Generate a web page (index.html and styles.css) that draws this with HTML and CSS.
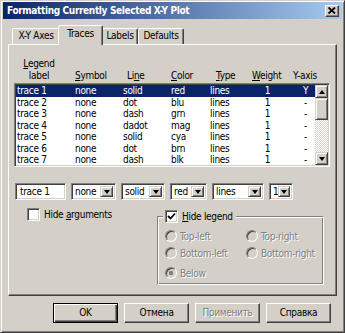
FILE: index.html
```html
<!DOCTYPE html>
<html lang="en">
<head>
  <meta charset="UTF-8">
  <title>Formatting Currently Selected X-Y Plot</title>
  <link rel="stylesheet" href="styles.css">
</head>
<body>
  <div class="window">
    <div class="titlebar">
      <span class="title">Formatting Currently Selected X-Y Plot</span>
      <span class="close">
        <svg width="8" height="7" viewBox="0 0 8 7"><path d="M0.5 0.5 L7 6.5 M7 0.5 L0.5 6.5" stroke="#000" stroke-width="1.8"/></svg>
      </span>
    </div>

    <div class="tabs">
      <div class="tab xy">X-Y Axes</div>
      <div class="tab traces active">Traces</div>
      <div class="tab labels">Labels</div>
      <div class="tab defaults">Defaults</div>
    </div>

    <div class="panel">
      <div class="list-head">
        <div class="h-label"><u>L</u>egend<br>label</div>
        <div class="h-symbol"><u>S</u>ymbol</div>
        <div class="h-line">Li<u>n</u>e</div>
        <div class="h-color"><u>C</u>olor</div>
        <div class="h-type"><u>T</u>ype</div>
        <div class="h-weight"><u>W</u>eight</div>
        <div class="h-axis">Y-axis</div>
      </div>

      <div class="list">
        <div class="rows">
          <div class="row sel"><span>trace 1</span><span>none</span><span>solid</span><span>red</span><span>lines</span><span class="c">1</span><span class="c">Y</span></div>
          <div class="row"><span>trace 2</span><span>none</span><span>dot</span><span>blu</span><span>lines</span><span class="c">1</span><span class="c">-</span></div>
          <div class="row"><span>trace 3</span><span>none</span><span>dash</span><span>grn</span><span>lines</span><span class="c">1</span><span class="c">-</span></div>
          <div class="row"><span>trace 4</span><span>none</span><span>dadot</span><span>mag</span><span>lines</span><span class="c">1</span><span class="c">-</span></div>
          <div class="row"><span>trace 5</span><span>none</span><span>solid</span><span>cya</span><span>lines</span><span class="c">1</span><span class="c">-</span></div>
          <div class="row"><span>trace 6</span><span>none</span><span>dot</span><span>brn</span><span>lines</span><span class="c">1</span><span class="c">-</span></div>
          <div class="row"><span>trace 7</span><span>none</span><span>dash</span><span>blk</span><span>lines</span><span class="c">1</span><span class="c">-</span></div>
        </div>
        <div class="scrollbar">
          <div class="sb-btn"><span class="arrow up"></span></div>
          <div class="thumb"></div>
          <div class="track"></div>
          <div class="sb-btn"><span class="arrow down"></span></div>
        </div>
      </div>

      <div class="editors">
        <div class="field w-name">trace 1</div>
        <div class="combo w-symbol"><span>none</span><span class="drop"><span class="arrow down"></span></span></div>
        <div class="combo w-line"><span>solid</span><span class="drop"><span class="arrow down"></span></span></div>
        <div class="combo w-color"><span>red</span><span class="drop"><span class="arrow down"></span></span></div>
        <div class="combo w-type"><span>lines</span><span class="drop"><span class="arrow down"></span></span></div>
        <div class="combo w-weight"><span>1</span><span class="drop"><span class="arrow down"></span></span></div>
      </div>

      <div class="options">
        <div class="check-row args">
          <span class="box"></span>
          <span>Hide <u>a</u>rguments</span>
        </div>

        <div class="group">
          <div class="legend check-row">
            <span class="box">
              <svg width="9" height="9" viewBox="0 0 9 9"><path d="M1 4 L3.5 6.5 L8 1.5" fill="none" stroke="#000" stroke-width="1.8"/></svg>
            </span>
            <span><u>H</u>ide legend</span>
          </div>
          <div class="radios">
            <div class="radio"><span class="dot"></span><span class="dis">Top-left</span></div>
            <div class="radio"><span class="dot"></span><span class="dis">Top-right</span></div>
            <div class="radio"><span class="dot"></span><span class="dis">Bottom-left</span></div>
            <div class="radio"><span class="dot"></span><span class="dis">Bottom-right</span></div>
            <div class="radio below"><span class="dot on"></span><span class="dis">Below</span></div>
          </div>
        </div>
      </div>
    </div>

    <div class="buttons">
      <div class="btn default">OK</div>
      <div class="btn">Отмена</div>
      <div class="btn"><span class="dis">Применить</span></div>
      <div class="btn">Справка</div>
    </div>
  </div>
</body>
</html>
```

FILE: styles.css
```css
:root {
  --face: #d4d0c8;
  --shadow: #808080;
  --dark: #404040;
  --hilite: #ffffff;
  --navy: #0a246a;
}

body {
  margin: 0;
  background: var(--face);
  font-family: 'DejaVu Sans Condensed', 'Liberation Sans', Arial, sans-serif;
  font-size: 10px;
  letter-spacing: -0.3px;
  color: #000;
}

u { text-decoration: underline; text-underline-offset: 1px; }

.window {
  width: 345px;
  height: 333px;
  box-sizing: border-box;
  border: 1px solid;
  border-color: var(--face) var(--dark) var(--dark) var(--face);
  box-shadow: inset 1px 1px var(--hilite), inset -1px -1px var(--shadow);
  padding: 1px 2px 2px 2px;
  background: var(--face);
}

/* title bar */
.titlebar {
  height: 17px;
  display: flex;
  align-items: center;
  justify-content: space-between;
  padding: 0 3px 0 4px;
  background: linear-gradient(to right, var(--navy), #a6caf0);
}

.title {
  color: #fff;
  font-weight: bold;
  font-size: 10px;
  letter-spacing: -0.35px;
}

.close {
  width: 14px;
  height: 12px;
  box-sizing: border-box;
  display: flex;
  align-items: center;
  justify-content: center;
  background: var(--face);
  border: 1px solid;
  border-color: var(--hilite) var(--dark) var(--dark) var(--hilite);
  box-shadow: inset -1px -1px var(--shadow);
}

/* tabs */
.tabs {
  display: flex;
  align-items: flex-end;
  height: 19px;
  margin: 6px 0 0 9px;
  position: relative;
  z-index: 1;
}

.tab {
  box-sizing: border-box;
  height: 16px;
  line-height: 14px;
  text-align: center;
  border: 1px solid;
  border-bottom: none;
  border-color: var(--hilite) var(--dark) transparent var(--hilite);
  box-shadow: inset -1px 0 var(--shadow);
  border-radius: 2px 2px 0 0;
  background: var(--face);
}

.tab.xy { width: 48px; }
.tab.traces { width: 43px; }
.tab.labels { width: 36px; }
.tab.defaults { width: 46px; }

.tab.active {
  height: 20px;
  width: 45px;
  margin: 0 -1px -1px -2px;
  line-height: 16px;
  position: relative;
  z-index: 2;
}

/* panel */
.panel {
  margin-left: 5px;
  width: 329px;
  height: 252px;
  box-sizing: border-box;
  border: 1px solid;
  border-color: var(--hilite) var(--dark) var(--dark) var(--hilite);
  box-shadow: inset -1px -1px var(--shadow);
  padding: 13px 6px 0 5px;
}

.list-head {
  display: grid;
  grid-template-columns: 48px 12px 52px 44px 45px 36px 41px auto;
  height: 24px;
  line-height: 12px;
  align-items: end;
  margin-left: 1px;
}

.h-label { text-align: center; grid-column: 1; }
.h-symbol { grid-column: 3; }
.h-line { grid-column: 4; }
.h-color { grid-column: 5; }
.h-type { grid-column: 6; }
.h-weight { grid-column: 7; }
.h-axis { grid-column: 8; }

.list {
  display: flex;
  width: 316px;
  height: 84px;
  margin-top: 1px;
  box-sizing: border-box;
  border: 1px solid;
  border-color: var(--shadow) var(--hilite) var(--hilite) var(--shadow);
  box-shadow: inset 1px 1px var(--dark), inset -1px -1px var(--face);
  padding: 1px;
  background: #fff;
}

.rows {
  flex: 1;
  overflow: hidden;
}

.row {
  display: grid;
  grid-template-columns: 59px 48px 48px 39px 33px 49px auto;
  height: 11.5px;
  line-height: 11.5px;
  white-space: nowrap;
}

.row span:first-child { padding-left: 1px; }
.row .c { text-align: center; }
.row .c:last-child { padding-left: 4px; }

.row.sel {
  background: var(--navy);
  color: #fff;
}

.scrollbar {
  width: 13px;
  display: flex;
  flex-direction: column;
}

.sb-btn {
  height: 13px;
  box-sizing: border-box;
  display: flex;
  align-items: center;
  justify-content: center;
  background: var(--face);
  border: 1px solid;
  border-color: var(--face) var(--dark) var(--dark) var(--face);
  box-shadow: inset 1px 1px var(--hilite), inset -1px -1px var(--shadow);
}

.thumb {
  height: 22px;
  box-sizing: border-box;
  background: var(--face);
  border: 1px solid;
  border-color: var(--face) var(--dark) var(--dark) var(--face);
  box-shadow: inset 1px 1px var(--hilite), inset -1px -1px var(--shadow);
}

.track {
  flex: 1;
  background: repeating-conic-gradient(#fff 0 25%, var(--face) 0 50%) 0 0 / 2px 2px;
}

.arrow {
  width: 0;
  height: 0;
  border-left: 3.5px solid transparent;
  border-right: 3.5px solid transparent;
}

.arrow.up { border-bottom: 4px solid #000; }
.arrow.down { border-top: 4px solid #000; }

/* editor row */
.editors {
  display: flex;
  gap: 5px;
  margin-top: 16px;
  height: 17px;
}

.field, .combo {
  box-sizing: border-box;
  height: 17px;
  border: 1px solid;
  border-color: var(--shadow) var(--hilite) var(--hilite) var(--shadow);
  box-shadow: inset 1px 1px var(--dark), inset -1px -1px var(--face);
  background: #fff;
  line-height: 15px;
}

.field { padding-left: 4px; }

.combo {
  display: flex;
  justify-content: space-between;
  padding: 2px 2px 2px 3px;
  line-height: 11px;
}

.drop {
  width: 13px;
  box-sizing: border-box;
  display: flex;
  align-items: center;
  justify-content: center;
  background: var(--face);
  border: 1px solid;
  border-color: var(--face) var(--dark) var(--dark) var(--face);
  box-shadow: inset 1px 1px var(--hilite), inset -1px -1px var(--shadow);
}

.w-name { width: 51px; margin-left: 1px; }
.w-symbol { width: 45px; }
.w-line { width: 44px; }
.w-color { width: 37px; }
.w-type { width: 52px; }
.w-weight { width: 24px; }

/* options */
.options {
  display: flex;
  margin-top: 8px;
}

.check-row {
  display: flex;
  align-items: center;
  gap: 4px;
  height: 13px;
}

.check-row.args {
  margin: 0 0 0 13px;
  width: 130px;
}

.box {
  width: 13px;
  height: 13px;
  box-sizing: border-box;
  display: flex;
  align-items: center;
  justify-content: center;
  border: 1px solid;
  border-color: var(--shadow) var(--hilite) var(--hilite) var(--shadow);
  box-shadow: inset 1px 1px var(--dark), inset -1px -1px var(--face);
  background: #fff;
}

.group {
  width: 167px;
  height: 69px;
  box-sizing: border-box;
  margin-top: 8px;
  border: 1px solid;
  border-color: var(--shadow) var(--hilite) var(--hilite) var(--shadow);
  box-shadow: inset 1px 1px var(--hilite), inset -1px -1px var(--shadow);
  position: relative;
  padding: 13px 0 0 7px;
}

.legend {
  position: absolute;
  top: -7px;
  left: 5px;
  padding: 0 3px 0 2px;
  background: var(--face);
}

.radios {
  display: grid;
  grid-template-columns: 81px auto;
  row-gap: 5px;
}

.radio {
  display: flex;
  align-items: center;
  gap: 3px;
  height: 12px;
}

.radio.below { margin-top: 3px; }

.dot {
  width: 12px;
  height: 12px;
  box-sizing: border-box;
  border-radius: 50%;
  border: 1px solid;
  border-color: var(--shadow) var(--hilite) var(--hilite) var(--shadow);
  box-shadow: inset 1px 1px var(--dark), inset -1px -1px var(--face);
  background: var(--face);
}

.dot.on {
  background: radial-gradient(circle, var(--shadow) 0 2px, var(--face) 2.5px);
}

.dis {
  color: var(--shadow);
  text-shadow: 1px 1px #fff;
}

/* dialog buttons */
.buttons {
  display: flex;
  gap: 6px;
  margin: 7px 0 0 50px;
}

.btn {
  width: 65px;
  height: 20px;
  box-sizing: border-box;
  line-height: 18px;
  text-align: center;
  background: var(--face);
  border: 1px solid;
  border-color: var(--hilite) var(--dark) var(--dark) var(--hilite);
  box-shadow: inset -1px -1px var(--shadow);
}

.btn.default {
  border: 1px solid #000;
  box-shadow: inset 1px 1px var(--hilite), inset -1px -1px var(--dark), inset -2px -2px var(--shadow);
}
```
